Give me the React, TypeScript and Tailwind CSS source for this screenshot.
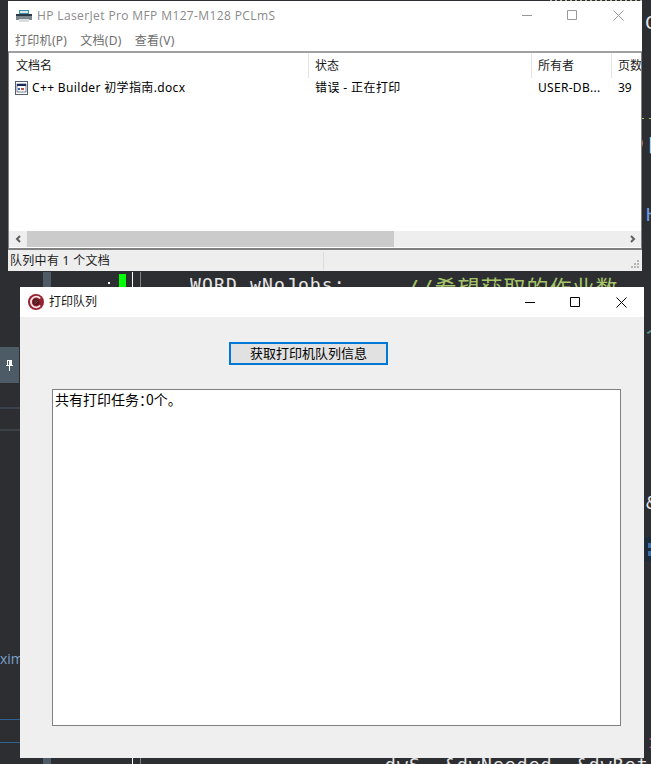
export default function App() {
  const ui = { fontFamily: '"Open Sans","Noto Sans CJK SC",sans-serif' };
  const cjk = { fontFamily: '"Noto Sans","Noto Sans CJK SC",sans-serif' };
  const mono = { fontFamily: '"DejaVu Sans Mono","Noto Sans CJK SC",monospace' };
  return (
    <div className="relative w-[651px] h-[764px] overflow-hidden bg-[#2d2e32]">
      {/* Editor backdrop */}
      <div className="absolute left-[550px] top-0 w-[92px] h-px bg-[repeating-linear-gradient(90deg,#b9b5a0_0_2px,#2d2e32_2px_5px)]" />
      <div className="absolute left-[43px] top-[272px] w-[8px] h-[15px] bg-[#4f5b66]" />
      <div className="absolute left-[119px] top-[274px] w-[7px] h-[13px] bg-[#00ff00]" />
      <div className="absolute left-[132px] top-[272px] w-px h-[15px] bg-white" />
      <div className="absolute left-[140px] top-[272px] w-px h-[15px] bg-[#808080]" />
      <div className="absolute left-[108px] top-[282px] w-[2px] h-[2px] bg-white" />
      <div className="absolute left-[43px] top-[758px] w-[8px] h-[6px] bg-[#4f5b66]" />
      <div className="absolute left-[132px] top-[758px] w-px h-[6px] bg-white" />
      <div className="absolute left-[140px] top-[758px] w-px h-[6px] bg-[#808080]" />
      <div className="absolute left-0 top-[347px] w-[19px] h-[36px] bg-[#4d5b67] flex items-center justify-center">
        <svg width="7" height="11" viewBox="0 0 7 11" fill="none">
          <path d="M1 .5h5M1.500 1v4.500M5.500 1v4.500M0 5.500h7M3.500 6v5" stroke="#fff" />
          <path d="M3 1h2v4H3z" fill="#fff" />
        </svg>
      </div>
      <div className="absolute left-0 top-[407px] w-[20px] h-[2px] bg-[#3a4148]" />
      <div className="absolute left-0 top-[429px] w-[20px] h-[2px] bg-[#3a4148]" />
      <div className="absolute left-0 top-[719px] w-[20px] h-px bg-[#2f6393]" />
      <div className="absolute left-0 top-[742px] w-[20px] h-px bg-[#2f6393]" />
      <div className="absolute left-0 top-[650px] w-[20px] overflow-hidden text-[14px] leading-[18px] text-[#7aa0cc]" style={ui}>xim</div>

      <div className="absolute left-[190px] top-[274px] h-[13px] overflow-hidden whitespace-pre text-[18px] leading-[22px] tracking-[1.15px] text-[#e6e6e6]" style={mono}>WORD wNoJobs;</div>
      <div className="absolute left-[406px] top-[275px] h-[12px] overflow-hidden whitespace-pre text-[22px] leading-[28px] tracking-[1px] text-[#a6c46a]" style={mono}>//希望获取的作业数</div>
      <div className="absolute left-[385px] top-[754px] h-[10px] overflow-hidden whitespace-pre text-[18px] leading-[22px] tracking-[1.15px] text-[#e6e6e6]" style={mono}>dwS, &amp;dwNeeded, &amp;dwRet</div>

      <div className="absolute left-[645px] top-[12px] text-[18px] leading-[22px] text-[#e6e6e6]" style={mono}>C</div>
      <div className="absolute left-[642px] top-[118px] w-[2px] h-px bg-[#a6c46a]" />
      <div className="absolute left-[649px] top-[118px] w-[2px] h-px bg-[#a6c46a]" />
      <div className="absolute left-[636px] top-[132px] w-[8px] overflow-hidden text-[16px] leading-[22px] text-[#e6e6e6]" style={mono}>)</div>
      <div className="absolute left-[646px] top-[134px] text-[18px] leading-[22px] text-[#e6e6e6]" style={mono}>[</div>
      <div className="absolute left-[646px] top-[204px] text-[18px] leading-[22px] text-[#6f9ce6]" style={mono}>H</div>
      <div className="absolute left-[646px] top-[324px] text-[18px] leading-[22px] text-[#5a9a8a]" style={mono}>个</div>
      <div className="absolute left-[646px] top-[492px] text-[18px] leading-[22px] text-[#e6e6e6]" style={mono}>&amp;</div>
      <div className="absolute left-[645px] top-[537px] w-[6px] h-[24px] bg-[#1b2c3a] flex flex-col items-end justify-center gap-[3px]">
        <div className="w-[3px] h-[5px] bg-[#3f6fa8]" />
        <div className="w-[3px] h-[5px] bg-[#3f6fa8]" />
      </div>
      <div className="absolute left-[648px] top-[734px] text-[14px] leading-[18px] text-[#e06c9f]" style={mono}>1</div>

      {/* Printer queue window */}
      <section className="absolute left-[8px] top-px w-[634px] h-[270px] flex flex-col bg-white" style={ui}>
        <header className="h-[29px] shrink-0 flex items-center">
          <svg className="ml-[8px] mr-[5px]" width="16" height="16" viewBox="0 0 16 16">
            <rect x="3" y="2" width="10" height="4" fill="#3f93a8" />
            <rect x="4" y="3" width="8" height="2" fill="#d5e8ec" />
            <rect x="0" y="6" width="16" height="6" fill="#7b868d" />
            <rect x="0" y="6" width="16" height="2" fill="#2b3a44" />
            <rect x="3" y="11" width="10" height="3" fill="#d9dde0" />
          </svg>
          <span className="text-[12px] text-[#8a8a8a] tracking-[0.38px]">HP LaserJet Pro MFP M127-M128 PCLmS</span>
          <div className="ml-auto flex items-center">
            <svg className="mr-[34px]" width="11" height="11" viewBox="0 0 11 11"><path d="M0 5.500h10" stroke="#999" /></svg>
            <svg className="mr-[35px]" width="11" height="11" viewBox="0 0 11 11"><path d="M.5.500h9v9h-9z" fill="none" stroke="#999" /></svg>
            <svg className="mr-[18px]" width="11" height="11" viewBox="0 0 11 11"><path d="M.5.500l10 10M10.500.500l-10 10" fill="none" stroke="#999" /></svg>
          </div>
        </header>
        <nav className="h-[21px] shrink-0 flex items-center gap-[13px] pl-[7px] text-[12px] tracking-[0.3px] text-[#6e6e6e]" style={cjk}>
          <span>打印机(P)</span>
          <span>文档(D)</span>
          <span>查看(V)</span>
        </nav>
        <div className="flex-1 min-h-0 flex flex-col border-t-2 border-b-2 border-t-[#a0a0a0] border-b-[#808080] border-x border-x-[#808080] bg-white text-[12px] text-black" style={cjk}>
          <div className="h-[25px] shrink-0 flex items-center text-[#1a1a1a]">
            <div className="w-[300px] pl-[7px] border-r border-[#e5e5e5] h-[24px] leading-[24px]">文档名</div>
            <div className="w-[223px] pl-[6px] border-r border-[#e5e5e5] h-[24px] leading-[24px]">状态</div>
            <div className="w-[80px] pl-[6px] border-r border-[#e5e5e5] h-[24px] leading-[24px]">所有者</div>
            <div className="flex-1 pl-[6px] overflow-hidden whitespace-nowrap h-[24px] leading-[24px]">页数</div>
          </div>
          <div className="h-[20px] shrink-0 flex items-center">
            <div className="w-[300px] pl-[6px] flex items-center gap-[3px]">
              <svg width="14" height="14" viewBox="0 0 14 14">
                <rect x=".5" y=".5" width="12" height="13" fill="#fff" stroke="#55606a" />
                <rect x="2" y="3" width="9" height="8" fill="#fff" stroke="#1c2a5a" strokeWidth=".6" />
                <rect x="2" y="3" width="9" height="2" fill="#1c2a5a" />
                <rect x="3" y="7" width="2" height="2" fill="#2b6cb0" />
                <rect x="6" y="7" width="3" height="2" fill="#c05050" />
              </svg>
              <span className="tracking-[0.35px]">C++ Builder 初学指南.docx</span>
            </div>
            <div className="w-[223px] pl-[6px] tracking-[0.4px]">错误 - 正在打印</div>
            <div className="w-[80px] pl-[6px] tracking-[0.3px]">USER-DB...</div>
            <div className="flex-1 pl-[6px]">39</div>
          </div>
          <div className="flex-1" />
          <div className="h-[16px] mb-px shrink-0 flex items-stretch bg-[#eeeeee]">
            <div className="w-[18px] flex items-center justify-center">
              <svg width="7" height="8" viewBox="0 0 7 8"><path d="M5 1L2 4l3 3" fill="none" stroke="#5f5f5f" strokeWidth="2" /></svg>
            </div>
            <div className="w-[367px] bg-[#cbcbcb]" />
            <div className="flex-1" />
            <div className="w-[18px] flex items-center justify-center">
              <svg width="7" height="8" viewBox="0 0 7 8"><path d="M2 1l3 3-3 3" fill="none" stroke="#5f5f5f" strokeWidth="2" /></svg>
            </div>
          </div>
        </div>
        <footer className="h-[21px] shrink-0 flex items-center bg-[#eeeeee] pt-px pl-[2px] text-[12px] tracking-[0.3px] text-[#1a1a1a] relative" style={cjk}>
          <span className="w-[314px] shrink-0 border-r border-[#dcdcdc] h-[18px] leading-[18px]">队列中有 1 个文档</span>
          <svg className="absolute right-[2px] bottom-[2px]" width="9" height="9" viewBox="0 0 9 9" fill="#b5b5b5">
            <rect x="6" y="0" width="2" height="2" />
            <rect x="3" y="3" width="2" height="2" />
            <rect x="6" y="3" width="2" height="2" />
            <rect x="0" y="6" width="2" height="2" />
            <rect x="3" y="6" width="2" height="2" />
            <rect x="6" y="6" width="2" height="2" />
          </svg>
        </footer>
      </section>

      {/* Application window */}
      <section className="absolute left-[20px] top-[287px] w-[624px] h-[471px] flex flex-col bg-[#efefef]" style={cjk}>
        <header className="h-[30px] shrink-0 bg-white flex items-center">
          <svg className="ml-[8px] mr-[5px]" width="16" height="16" viewBox="0 0 16 16">
            <circle cx="8" cy="8" r="8" fill="#98202f" />
            <path d="M12.200 4.500A5.300 5.300 0 1 0 12.200 11.500" fill="none" stroke="#f2e6e6" strokeWidth="1.800" />
            <circle cx="8.200" cy="8" r="3.300" fill="#4a1a20" />
            <path d="M6 8.500l3-3M7 10l3.500-3.500" stroke="#a85a62" strokeWidth=".7" />
          </svg>
          <span className="text-[12px] text-[#1a1a1a]">打印队列</span>
          <div className="ml-auto flex items-center">
            <svg className="mr-[34px]" width="11" height="11" viewBox="0 0 11 11"><path d="M0 5.500h10" stroke="#000" /></svg>
            <svg className="mr-[35px]" width="11" height="11" viewBox="0 0 11 11"><path d="M.5.500h9v9h-9z" fill="none" stroke="#000" /></svg>
            <svg className="mr-[17px]" width="11" height="11" viewBox="0 0 11 11"><path d="M.5.500l10 10M10.500.500l-10 10" fill="none" stroke="#000" /></svg>
          </div>
        </header>
        <div className="flex-1 flex flex-col items-start pt-[25px] pl-[32px]">
          <button className="ml-[177px] w-[159px] h-[23px] border-2 border-[#0078d7] bg-[#e1e1e1] text-[13px] leading-[19px] text-black flex items-center justify-center">获取打印机队列信息</button>
          <div className="mt-[24px] w-[569px] h-[337px] border border-[#808080] bg-white pl-[2px] text-[14px] leading-[18px] text-black [font-feature-settings:'halt']" style={{ fontFamily: '"Noto Sans CJK SC",sans-serif' }}>共有打印任务：0个。</div>
        </div>
      </section>
    </div>
  );
}
